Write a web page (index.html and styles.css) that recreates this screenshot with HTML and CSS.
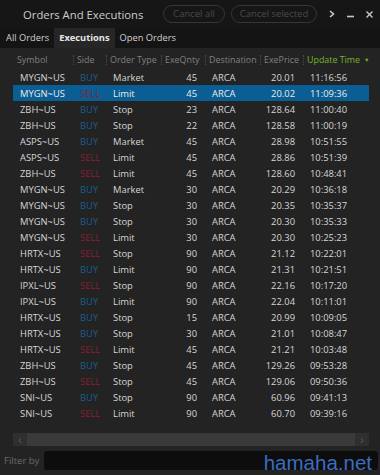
FILE: index.html
```html
<!DOCTYPE html>
<html>
<head>
<meta charset="utf-8">
<link rel="stylesheet" href="styles.css">
</head>
<body>
<div class="titlebar">
  <span class="title">Orders And Executions</span>
  <div class="btns">
    <span class="pill">Cancel all</span>
    <span class="pill">Cancel selected</span>
  </div>
  <div class="winctl">
    <svg width="6" height="8" viewBox="0 0 6 8"><path d="M1 1 L4.5 4 L1 7" fill="none" stroke="#c8c8c8" stroke-width="1.6"/></svg>
    <svg width="7" height="8" viewBox="0 0 7 8"><path d="M0 6.5 H7" stroke="#c8c8c8" stroke-width="1.6"/></svg>
    <svg width="7" height="7" viewBox="0 0 7 7"><path d="M0.5 0.5 L6.5 6.5 M6.5 0.5 L0.5 6.5" stroke="#c8c8c8" stroke-width="1.4"/></svg>
  </div>
</div>
<div class="tabs">
  <span class="tab">All Orders</span>
  <span class="tab active">Executions</span>
  <span class="tab">Open Orders</span>
</div>
<div class="panel">
  <table class="grid">
    <colgroup>
      <col class="c1"><col class="c2"><col class="c3"><col class="c4"><col class="c5"><col class="c6"><col class="c7">
    </colgroup>
    <thead>
      <tr>
        <th>Symbol</th><th class="sep">Side</th><th class="sep">Order Type</th><th class="sep">ExeQnty</th><th class="sep">Destination</th><th class="sep">ExePrice</th><th class="sep sorted">Update Time<span class="arrow">&#9660;</span></th>
      </tr>
    </thead>
    <tbody>
      <tr><td>MYGN~US</td><td class="buy">BUY</td><td>Market</td><td class="num">45</td><td>ARCA</td><td class="num">20.01</td><td>11:16:56</td></tr>
      <tr class="sel"><td>MYGN~US</td><td class="sell">SELL</td><td>Limit</td><td class="num">45</td><td>ARCA</td><td class="num">20.02</td><td>11:09:36</td></tr>
      <tr><td>ZBH~US</td><td class="buy">BUY</td><td>Stop</td><td class="num">23</td><td>ARCA</td><td class="num">128.64</td><td>11:00:40</td></tr>
      <tr><td>ZBH~US</td><td class="buy">BUY</td><td>Stop</td><td class="num">22</td><td>ARCA</td><td class="num">128.58</td><td>11:00:19</td></tr>
      <tr><td>ASPS~US</td><td class="buy">BUY</td><td>Market</td><td class="num">45</td><td>ARCA</td><td class="num">28.98</td><td>10:51:55</td></tr>
      <tr><td>ASPS~US</td><td class="sell">SELL</td><td>Limit</td><td class="num">45</td><td>ARCA</td><td class="num">28.86</td><td>10:51:39</td></tr>
      <tr><td>ZBH~US</td><td class="sell">SELL</td><td>Limit</td><td class="num">45</td><td>ARCA</td><td class="num">128.60</td><td>10:48:41</td></tr>
      <tr><td>MYGN~US</td><td class="buy">BUY</td><td>Market</td><td class="num">30</td><td>ARCA</td><td class="num">20.29</td><td>10:36:18</td></tr>
      <tr><td>MYGN~US</td><td class="buy">BUY</td><td>Stop</td><td class="num">30</td><td>ARCA</td><td class="num">20.35</td><td>10:35:37</td></tr>
      <tr><td>MYGN~US</td><td class="buy">BUY</td><td>Stop</td><td class="num">30</td><td>ARCA</td><td class="num">20.30</td><td>10:35:33</td></tr>
      <tr><td>MYGN~US</td><td class="sell">SELL</td><td>Limit</td><td class="num">30</td><td>ARCA</td><td class="num">20.30</td><td>10:25:23</td></tr>
      <tr><td>HRTX~US</td><td class="sell">SELL</td><td>Stop</td><td class="num">90</td><td>ARCA</td><td class="num">21.12</td><td>10:22:01</td></tr>
      <tr><td>HRTX~US</td><td class="buy">BUY</td><td>Limit</td><td class="num">90</td><td>ARCA</td><td class="num">21.31</td><td>10:21:51</td></tr>
      <tr><td>IPXL~US</td><td class="sell">SELL</td><td>Stop</td><td class="num">90</td><td>ARCA</td><td class="num">22.16</td><td>10:17:20</td></tr>
      <tr><td>IPXL~US</td><td class="buy">BUY</td><td>Limit</td><td class="num">90</td><td>ARCA</td><td class="num">22.04</td><td>10:11:01</td></tr>
      <tr><td>HRTX~US</td><td class="buy">BUY</td><td>Stop</td><td class="num">15</td><td>ARCA</td><td class="num">20.99</td><td>10:09:05</td></tr>
      <tr><td>HRTX~US</td><td class="buy">BUY</td><td>Stop</td><td class="num">30</td><td>ARCA</td><td class="num">21.01</td><td>10:08:47</td></tr>
      <tr><td>HRTX~US</td><td class="sell">SELL</td><td>Limit</td><td class="num">45</td><td>ARCA</td><td class="num">21.21</td><td>10:03:48</td></tr>
      <tr><td>ZBH~US</td><td class="buy">BUY</td><td>Stop</td><td class="num">45</td><td>ARCA</td><td class="num">129.26</td><td>09:53:28</td></tr>
      <tr><td>ZBH~US</td><td class="sell">SELL</td><td>Stop</td><td class="num">45</td><td>ARCA</td><td class="num">129.06</td><td>09:50:36</td></tr>
      <tr><td>SNI~US</td><td class="buy">BUY</td><td>Stop</td><td class="num">90</td><td>ARCA</td><td class="num">60.96</td><td>09:41:13</td></tr>
      <tr><td>SNI~US</td><td class="sell">SELL</td><td>Limit</td><td class="num">90</td><td>ARCA</td><td class="num">60.70</td><td>09:39:16</td></tr>
    </tbody>
  </table>
  <div class="hscroll">
    <span class="sbtn">&#8249;</span>
    <span class="track"></span>
    <span class="sbtn">&#8250;</span>
  </div>
</div>
<div class="filter">
  <span class="flabel">Filter by</span>
  <span class="finput"></span>
</div>
<div class="watermark">hamaha.net</div>
</body>
</html>
```
FILE: styles.css
```css
* { box-sizing: border-box; }
html, body { margin: 0; padding: 0; }
body {
  width: 380px;
  height: 475px;
  overflow: hidden;
  background: #232323;
  font-family: "Open Sans", "Noto Sans", sans-serif;
  color: #d6d6d6;
  display: flex;
  flex-direction: column;
  position: relative;
}
.titlebar {
  height: 28px;
  background: #161616;
  display: flex;
  align-items: center;
  padding-left: 23px;
}
.title {
  font-size: 11.3px;
  color: #cdcdcd;
  width: 140px;
  white-space: nowrap;
}
.btns {
  display: flex;
  gap: 6px;
}
.pill {
  height: 18px;
  border: 1px solid #363636;
  border-radius: 9px;
  font-size: 9.5px;
  line-height: 16px;
  color: #4a4a4a;
  white-space: nowrap;
  text-align: center;
}
.pill:first-child { width: 62px; }
.pill:last-child { width: 86px; }
.winctl {
  display: flex;
  align-items: center;
  gap: 12px;
  margin-left: 12px;
}
.tabs {
  height: 20px;
  background: #141414;
  display: flex;
  padding-left: 1px;
}
.tab {
  font-size: 9.3px;
  line-height: 20px;
  padding: 0 5px;
  color: #d0d0d0;
  white-space: nowrap;
}
.tab.active {
  background: #262626;
  font-weight: bold;
  color: #e6e6e6;
}
.panel {
  flex: 1;
  background: #232323;
  padding: 2px 11px 0 13px;
  display: flex;
  flex-direction: column;
}
.grid {
  width: 356px;
  table-layout: fixed;
  border-collapse: collapse;
  font-size: 9.4px;
}
.c1 { width: 60px; }
.c2 { width: 33px; }
.c3 { width: 55px; }
.c4 { width: 44px; }
.c5 { width: 55px; }
.c6 { width: 43px; }
.c7 { width: 66px; }
th {
  height: 19px;
  font-size: 8.9px;
  font-weight: normal;
  color: #808080;
  text-align: left;
  padding: 0 0 0 4px;
  white-space: nowrap;
  overflow: hidden;
  position: relative;
}
th.sep::before {
  content: "";
  position: absolute;
  left: 0;
  top: 5px;
  height: 10px;
  border-left: 1px dotted #4c4c4c;
}
th.sorted { color: #76b52c; }
.arrow { font-size: 5.5px; vertical-align: 1px; margin-left: 4px; }
td {
  height: 16px;
  padding: 0 0 0 7px;
  white-space: nowrap;
  overflow: hidden;
  color: #d6d6d6;
}
td.num { text-align: right; padding: 0 8px 0 0; }
td.buy { color: #1d5b8c; }
td.sell { color: #8c1d2f; }
tr.sel td { background: #0b5e93; color: #ececec; }
tr.sel td.sell { color: #8c1d2f; }
.hscroll {
  margin-top: auto;
  margin-bottom: 2px;
  height: 13px;
  width: 356px;
  display: flex;
}
.sbtn {
  width: 14px;
  background: #2f2f2f;
  color: #555;
  font-size: 13px;
  line-height: 12px;
  text-align: center;
}
.track {
  flex: 1;
  background: #3a3a3a;
}
.filter {
  height: 27px;
  display: flex;
  align-items: center;
  padding: 0 2px 2px 4px;
  gap: 5px;
}
.flabel {
  font-size: 9.5px;
  color: #6a6a6a;
}
.finput {
  flex: 1;
  height: 19px;
  background: #0d0d0d;
  border-radius: 3px;
}
.watermark {
  position: absolute;
  right: 8px;
  bottom: 0px;
  font-family: "Liberation Sans", sans-serif;
  font-size: 20.5px;
  color: #3b6cc1;
  line-height: 24px;
}
```
